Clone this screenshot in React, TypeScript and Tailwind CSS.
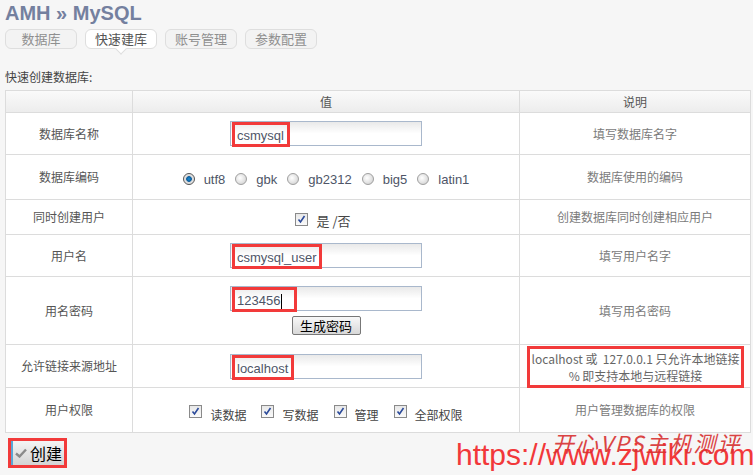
import React from 'react';

const cn = '"Noto Sans CJK SC", "Liberation Sans", sans-serif';

const Radio = ({ checked }: { checked?: boolean }) => (
  <span
    className={
      'inline-block w-[12px] h-[12px] rounded-full border ' +
      (checked
        ? 'border-[#555] bg-[radial-gradient(circle,#1b8fd6_0,#0a5a9a_35%,#d8d8d8_45%,#f4f4f4_100%)]'
        : 'border-[#a0a0a0] bg-[radial-gradient(circle_at_40%_40%,#ffffff_0,#e0e0e0_60%,#c4c4c4_100%)]')
    }
  />
);

const Check = () => (
  <span className="inline-flex w-[13px] h-[13px] border border-[#8a8a8a] bg-gradient-to-b from-[#e8e8e8] to-[#fafafa] items-center justify-center">
    <svg width="9" height="9" viewBox="0 0 9 9">
      <path d="M1.5 4.5 L3.5 7 L7.5 1" fill="none" stroke="#2b4a9a" strokeWidth="1.6" />
    </svg>
  </span>
);

const Field = ({ value, box, caret }: { value: string; box: number; caret?: boolean }) => (
  <div className="relative w-[192px] h-[25px] border border-[#a9b8cc] bg-gradient-to-b from-[#e9e9e9] via-white to-white mx-auto text-left">
    <span className="absolute left-[6px] top-[4px] text-[13px] text-[#4e5567]" style={{ fontFamily: '"Liberation Sans", Arial, sans-serif' }}>
      {value}
      {caret && <span className="inline-block w-px h-[15px] bg-black align-middle ml-px" />}
    </span>
    <span className="absolute left-[1px] top-[0px] h-[25px] border-[3px] border-[#f23a3a]" style={{ width: box }} />
  </div>
);

const App = () => {
  const td = 'border border-[#dcdcdc] text-center text-[12px] text-[#555]';
  const desc = 'border border-[#dcdcdc] text-center text-[12px] text-[#7b7b7b]';
  return (
    <div className="w-[753px] h-[475px] bg-[#f6f6f6] relative overflow-hidden" style={{ fontFamily: cn }}>
      <div className="pl-[5px] pt-[1px] text-[20px] font-bold text-[#74809f] leading-[24px]" style={{ fontFamily: '"Liberation Sans", Arial, sans-serif' }}>
        AMH » MySQL
      </div>
      <div className="flex gap-[8px] pl-[5px] mt-[4px]">
        {['数据库', '快速建库', '账号管理', '参数配置'].map((t, i) => (
          <div
            key={t}
            className={
              'relative w-[72px] h-[20px] rounded-[6px] border border-[#dedede] flex items-center justify-center text-[13px] ' +
              (i === 1 ? 'bg-white text-[#555]' : 'bg-[#f3f3f3] text-[#8f8f8f]')
            }
          >
            {t}
            {i === 1 && (
              <span className="absolute left-[31px] bottom-[-5px] w-[8px] h-[8px] bg-white border-r border-b border-[#dedede] rotate-45" />
            )}
          </div>
        ))}
      </div>
      <div className="pl-[5px] mt-[20px] text-[12px] text-[#444] leading-[16px]">快速创建数据库:</div>
      <table className="ml-[5px] mt-[5px] w-[745px] border-collapse bg-white table-fixed">
        <colgroup>
          <col className="w-[127px]" />
          <col className="w-[387px]" />
          <col className="w-[231px]" />
        </colgroup>
        <thead>
          <tr className="h-[22px] bg-gradient-to-b from-[#fafafa] to-[#ececec]">
            <th className={td + ' font-normal'}></th>
            <th className={td + ' font-normal'}>值</th>
            <th className={td + ' font-normal'}>说明</th>
          </tr>
        </thead>
        <tbody>
          <tr className="h-[42px]">
            <td className={td}>数据库名称</td>
            <td className={td}>
              <Field value="csmysql" box={58} />
            </td>
            <td className={desc}>填写数据库名字</td>
          </tr>
          <tr className="h-[45px]">
            <td className={td}>数据库编码</td>
            <td className={td}>
              <div className="flex items-center justify-center gap-[10px] pt-[3px] text-[#4e5567] text-[13px]" style={{ fontFamily: '"Liberation Sans", Arial, sans-serif' }}>
                {['utf8', 'gbk', 'gb2312', 'big5', 'latin1'].map((e, i) => (
                  <span key={e} className="flex items-center gap-[9px]">
                    <Radio checked={i === 0} />
                    <span className="mt-[3px]">{e}</span>
                  </span>
                ))}
              </div>
            </td>
            <td className={desc}>数据库使用的编码</td>
          </tr>
          <tr className="h-[35px]">
            <td className={td}>同时创建用户</td>
            <td className={td}>
              <div className="flex items-center justify-center gap-[8px] pt-[4px] pr-[6px]">
                <Check />
                <span className="text-[13px] text-[#444] mt-[3px]">是 /否</span>
              </div>
            </td>
            <td className={desc}>创建数据库同时创建相应用户</td>
          </tr>
          <tr className="h-[42px]">
            <td className={td}>用户名</td>
            <td className={td}>
              <Field value="csmysql_user" box={90} />
            </td>
            <td className={desc}>填写用户名字</td>
          </tr>
          <tr className="h-[68px]">
            <td className={td}>用名密码</td>
            <td className={td}>
              <div className="flex flex-col items-center gap-[5px]">
                <Field value="123456" box={65} caret />
                <button className="w-[69px] h-[19px] border border-[#777] rounded-[2px] bg-gradient-to-b from-[#f8f8f8] to-[#d8d8d8] text-[13px] text-black leading-none">
                  生成密码
                </button>
              </div>
            </td>
            <td className={desc}>填写用名密码</td>
          </tr>
          <tr className="h-[43px]">
            <td className={td}>允许链接来源地址</td>
            <td className={td}>
              <Field value="localhost" box={62} />
            </td>
            <td className={desc + ' relative'}>
              <div className="absolute left-[7px] right-[6px] top-[1px] bottom-[-1px] border-[3px] border-[#f23a3a] flex flex-col items-center justify-center text-[12px] leading-[17px] text-[#666]">
                <span>localhost 或 &nbsp;127.0.0.1 只允许本地链接</span>
                <span>% 即支持本地与远程链接</span>
              </div>
            </td>
          </tr>
          <tr className="h-[45px]">
            <td className={td}>用户权限</td>
            <td className={td}>
              <div className="flex items-center justify-center gap-[15px] pt-[3px] text-[12px] text-[#444]">
                {['读数据', '写数据', '管理', '全部权限'].map((p) => (
                  <span key={p} className="flex items-center gap-[8px]">
                    <Check />
                    <span className="mt-[6px]">{p}</span>
                  </span>
                ))}
              </div>
            </td>
            <td className={desc}>用户管理数据库的权限</td>
          </tr>
        </tbody>
      </table>
      <div className="ml-[8px] mt-[5px] w-[59px] h-[30px] border-[3px] border-[#f23a3a] flex">
        <button className="flex-1 flex items-center justify-center gap-[3px] border-l-2 border-[#5aa6d6] bg-gradient-to-b from-[#f4f4f4] to-[#d4d4d4] text-[16px] text-black">
          <svg width="12" height="10" viewBox="0 0 12 10">
            <path d="M1 5.5 L4.5 8.5 L11 1.5" fill="none" stroke="#8a8a8a" strokeWidth="2.4" />
          </svg>
          创建
        </button>
      </div>
      <div className="absolute left-[456px] top-[440px] text-[30px] text-[#f2383a] leading-[30px]" style={{ fontFamily: '"Liberation Sans", Arial, sans-serif' }}>
        https://www.zjwiki.com
      </div>
      <div className="absolute left-[552px] top-[430px] text-[22px] text-[#d83030] italic tracking-[2px] leading-[24px] opacity-90" style={{ fontFamily: '"Noto Sans CJK SC", serif' }}>
        开心VPS主机测评
      </div>
    </div>
  );
};

export default App;
